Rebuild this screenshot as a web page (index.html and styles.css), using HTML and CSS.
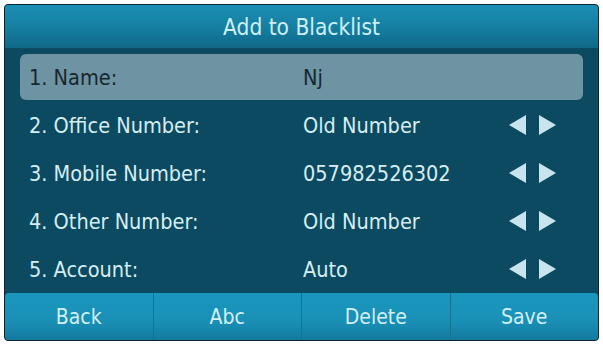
FILE: index.html
```html
<!DOCTYPE html>
<html>
<head>
<meta charset="utf-8">
<link rel="stylesheet" href="styles.css">
</head>
<body>
<div class="screen">
  <div class="title">Add to Blacklist</div>
  <div class="list">
    <div class="row selected">
      <span class="label">1. Name:</span>
      <span class="value">Nj</span>
    </div>
    <div class="row">
      <span class="label">2. Office Number:</span>
      <span class="value">Old Number</span>
      <span class="arrows"><span class="tri left"></span><span class="tri right"></span></span>
    </div>
    <div class="row">
      <span class="label">3. Mobile Number:</span>
      <span class="value">057982526302</span>
      <span class="arrows"><span class="tri left"></span><span class="tri right"></span></span>
    </div>
    <div class="row">
      <span class="label">4. Other Number:</span>
      <span class="value">Old Number</span>
      <span class="arrows"><span class="tri left"></span><span class="tri right"></span></span>
    </div>
    <div class="row">
      <span class="label">5. Account:</span>
      <span class="value">Auto</span>
      <span class="arrows"><span class="tri left"></span><span class="tri right"></span></span>
    </div>
  </div>
  <div class="softkeys">
    <div class="key">Back</div>
    <div class="key">Abc</div>
    <div class="key">Delete</div>
    <div class="key">Save</div>
  </div>
</div>
</body>
</html>
```
FILE: styles.css
```css
html, body {
  margin: 0;
  padding: 0;
  background: #ffffff;
}
body {
  padding: 4px 4px 0 4px;
  font-family: "DejaVu Sans", sans-serif;
  font-stretch: semi-condensed;
}
.screen {
  width: 593px;
  height: 335px;
  border: 1px solid #0a2530;
  border-radius: 4px;
  background: #0c4a61;
  display: flex;
  flex-direction: column;
  overflow: hidden;
}
.title {
  height: 43px;
  flex: none;
  display: flex;
  align-items: center;
  justify-content: center;
  color: #cdf0f8;
  font-size: 22.5px;
  background: linear-gradient(#1b8fb3 0%, #167fa2 50%, #0f6888 100%);
  border-radius: 3px 3px 0 0;
}
.list {
  flex: 1;
  padding: 5px 15px 0 15px;
  display: flex;
  flex-direction: column;
}
.row {
  height: 48px;
  flex: none;
  display: flex;
  align-items: center;
  color: #d6eef4;
  font-size: 21.5px;
  padding: 0 9px;
  box-sizing: border-box;
}
.row.selected {
  background: #6e93a3;
  color: #16262d;
  border-radius: 6px;
  height: 46px;
  margin: 1px 0;
}
.label {
  width: 274px;
  flex: none;
}
.value {
  flex: 1;
}
.arrows {
  display: flex;
  gap: 13px;
  margin-right: 18px;
}
.tri {
  width: 0;
  height: 0;
  border-top: 10px solid transparent;
  border-bottom: 10px solid transparent;
}
.tri.left {
  border-right: 17px solid #c9e4ec;
}
.tri.right {
  border-left: 17px solid #c9e4ec;
}
.softkeys {
  height: 48px;
  flex: none;
  display: flex;
  background: linear-gradient(#1a97be 0%, #1a8fb6 60%, #14789c 100%);
  border-radius: 4px 4px 0 0;
}
.key {
  flex: 1;
  display: flex;
  align-items: center;
  justify-content: center;
  color: #d3f0f7;
  font-size: 21px;
  border-left: 1px solid #137394;
}
.key:first-child {
  border-left: none;
}
```
